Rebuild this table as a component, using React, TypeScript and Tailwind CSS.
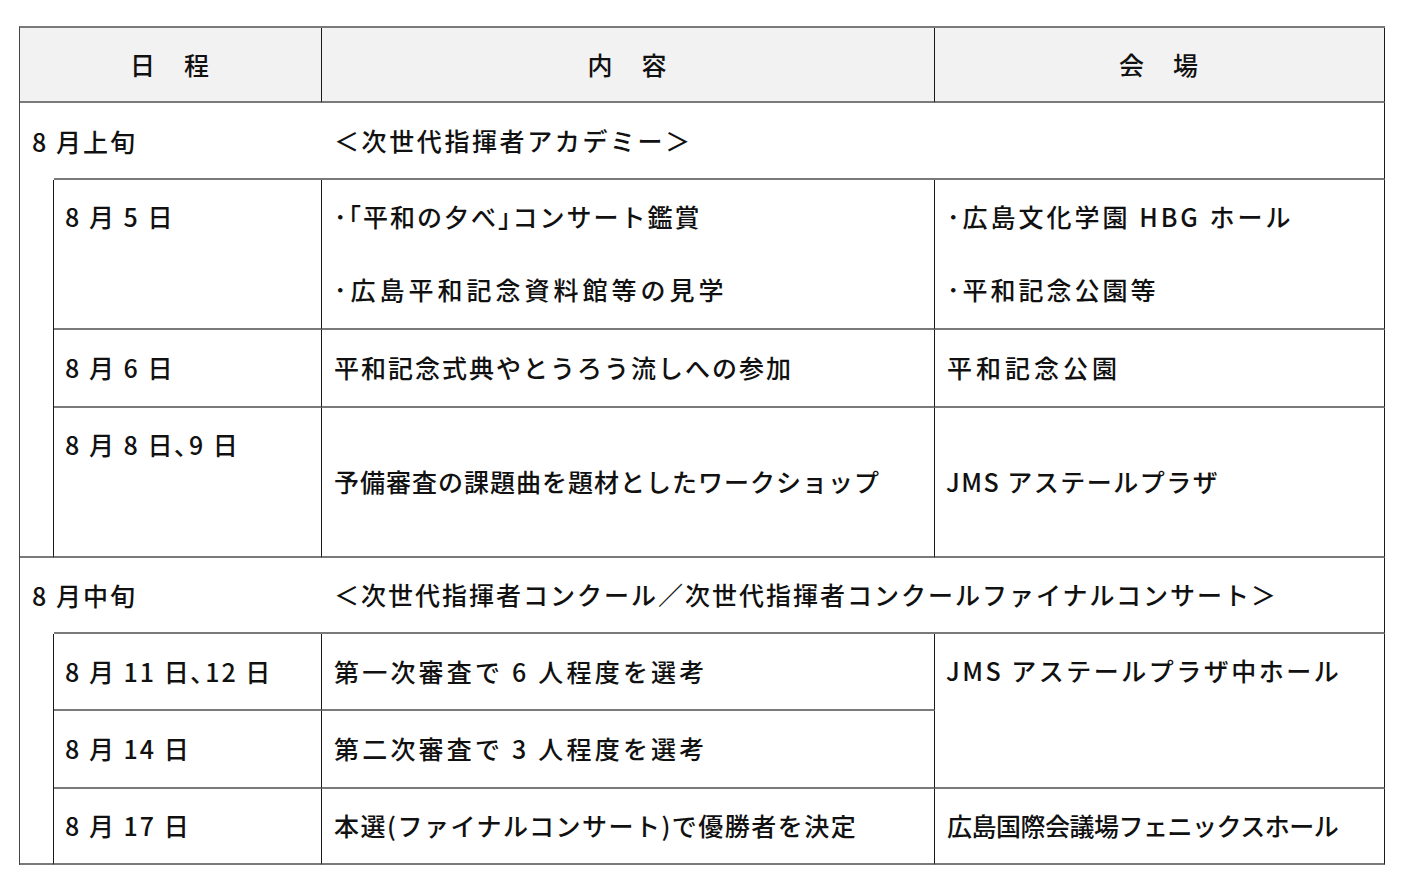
import * as React from "react"

const hb = "border-b-2 border-b-[#7a7a7a]"
const vr = "border-r border-r-[#1a1a1a]"

function Line({ children, className = "" }: { children: React.ReactNode; className?: string }) {
  return <div className={`leading-[73px] whitespace-nowrap ${className}`}>{children}</div>
}

export default function App() {
  return (
    <div className="min-h-screen bg-white pt-[26px] pl-[19px] text-[#111] font-['Noto_Sans_CJK_JP',sans-serif] font-medium text-[25px] tracking-[2px]">
      <div className="grid w-[1366px] grid-cols-[34px_268px_613px_450px] grid-rows-[75px_77px_150px_78px_150px_76px_77px_78px_76px] border-l border-l-[#444] border-t-2 border-t-[#7a7a7a]">
        {/* header */}
        <div className={`col-span-2 flex items-center justify-center bg-[#f2f2f2] ${vr} ${hb}`}>日　程</div>
        <div className={`flex items-center justify-center bg-[#f2f2f2] ${vr} ${hb}`}>内　容</div>
        <div className={`flex items-center justify-center bg-[#f2f2f2] ${vr} ${hb}`}>会　場</div>

        {/* 8月上旬 */}
        <div className="flex items-center pl-[12px]">
          <span className="whitespace-nowrap">8 月上旬</span>
        </div>
        <div className={hb}></div>
        <div className={`col-span-2 flex items-center pl-[12px] tracking-[2.6px] ${vr} ${hb}`}>＜次世代指揮者アカデミー＞</div>

        <div className={`row-span-3 ${vr} ${hb}`}></div>

        <div className={`pl-[11px] ${vr} ${hb}`}>
          <Line>8 月 5 日</Line>
        </div>
        <div className={`flex flex-col pl-[12px] ${vr} ${hb}`}>
          <Line>･｢平和の夕べ｣コンサート鑑賞</Line>
          <Line className="tracking-[4px]">･広島平和記念資料館等の見学</Line>
        </div>
        <div className={`flex flex-col pl-[12px] tracking-[3px] ${vr} ${hb}`}>
          <Line>･広島文化学園 HBG ホール</Line>
          <Line>･平和記念公園等</Line>
        </div>

        <div className={`flex items-center pl-[11px] ${vr} ${hb}`}>8 月 6 日</div>
        <div className={`flex items-center pl-[12px] ${vr} ${hb}`}>平和記念式典やとうろう流しへの参加</div>
        <div className={`flex items-center pl-[12px] tracking-[4px] ${vr} ${hb}`}>平和記念公園</div>

        <div className={`pl-[11px] ${vr} ${hb}`}>
          <Line>8 月 8 日､9 日</Line>
        </div>
        <div className={`flex items-center pl-[12px] tracking-[1px] ${vr} ${hb}`}>予備審査の課題曲を題材としたワークショップ</div>
        <div className={`flex items-center pl-[11px] tracking-[1.5px] ${vr} ${hb}`}>JMS アステールプラザ</div>

        {/* 8月中旬 */}
        <div className="flex items-center pl-[12px]">
          <span className="whitespace-nowrap">8 月中旬</span>
        </div>
        <div className={hb}></div>
        <div className={`col-span-2 flex items-center pl-[12px] whitespace-nowrap ${vr} ${hb}`}>
          ＜次世代指揮者コンクール／次世代指揮者コンクールファイナルコンサート＞
        </div>

        <div className={`row-span-3 ${vr} ${hb}`}></div>

        <div className={`flex items-center pl-[11px] ${vr} ${hb}`}>8 月 11 日､12 日</div>
        <div className={`flex items-center pl-[12px] tracking-[3.2px] ${vr} ${hb}`}>第一次審査で 6 人程度を選考</div>
        <div className={`row-span-2 pl-[11px] tracking-[2.5px] ${vr} ${hb}`}>
          <Line>JMS アステールプラザ中ホール</Line>
        </div>

        <div className={`flex items-center pl-[11px] ${vr} ${hb}`}>8 月 14 日</div>
        <div className={`flex items-center pl-[12px] tracking-[3.2px] ${vr} ${hb}`}>第二次審査で 3 人程度を選考</div>

        <div className={`flex items-center pl-[11px] ${vr} ${hb}`}>8 月 17 日</div>
        <div className={`flex items-center pl-[12px] tracking-[1.5px] ${vr} ${hb}`}>本選(ファイナルコンサート)で優勝者を決定</div>
        <div className={`flex items-center pl-[12px] tracking-[-0.5px] ${vr} ${hb}`}>広島国際会議場フェニックスホール</div>
      </div>
    </div>
  )
}
